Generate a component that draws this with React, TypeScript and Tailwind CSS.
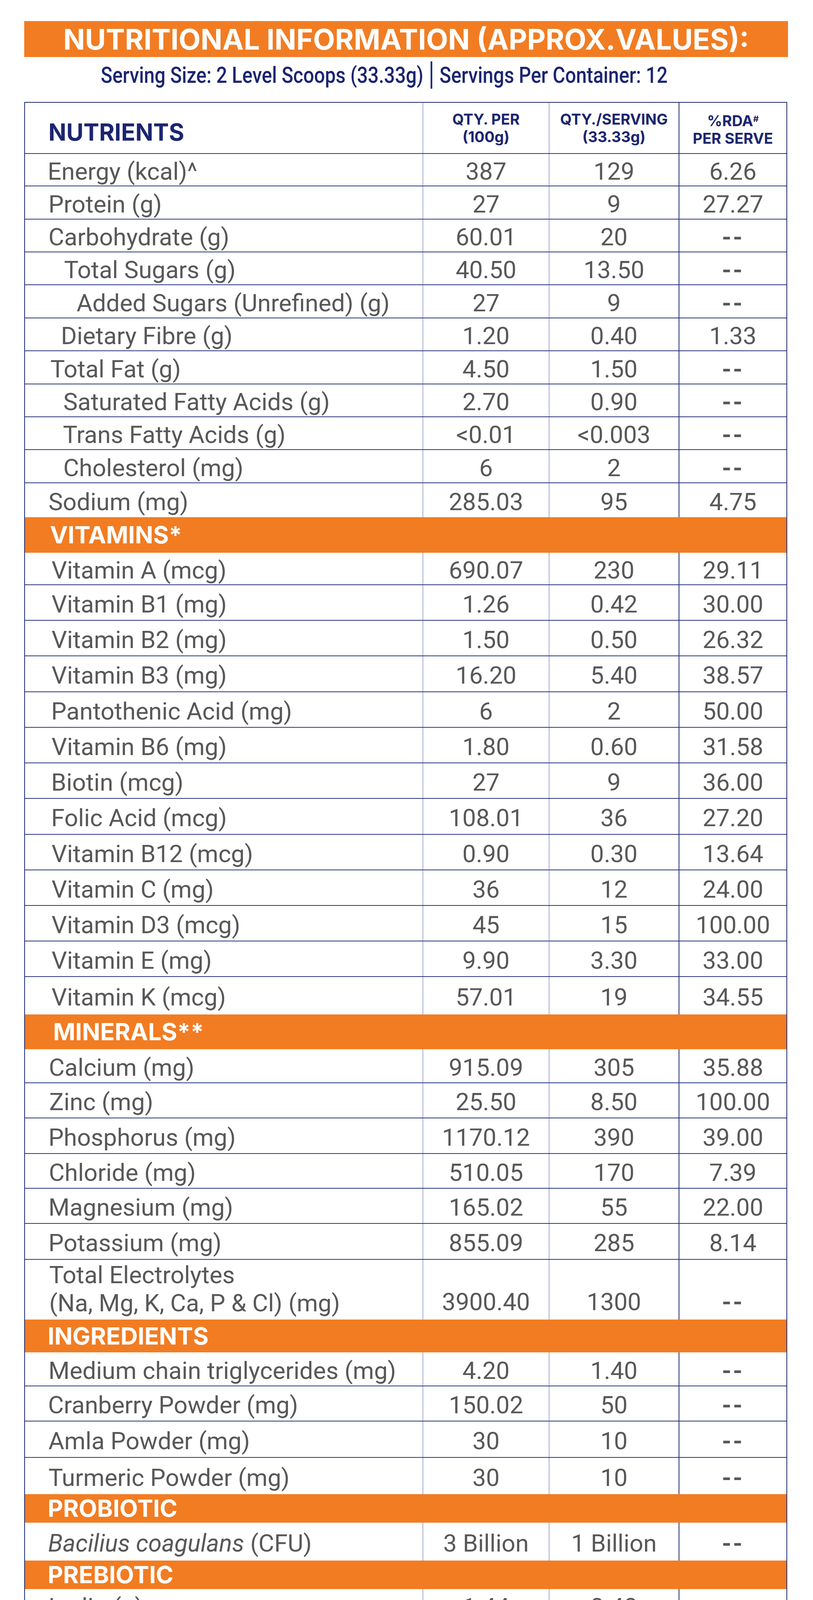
import React from "react";

type Band = { band: string; h: string; pl: string };
type Line = {
  name: React.ReactNode;
  v: [string, string, string];
  h: string;
  pl?: string;
  tall?: boolean;
};
type Item = Band | Line;

const items: Item[] = [
  { name: "Energy (kcal)^", v: ["387", "129", "6.26"], h: "h-[83px]", pl: "pl-[58px]" },
  { name: "Protein (g)", v: ["27", "9", "27.27"], h: "h-[85px]" },
  { name: "Carbohydrate (g)", v: ["60.01", "20", "--"], h: "h-[84px]" },
  { name: "Total Sugars (g)", v: ["40.50", "13.50", "--"], h: "h-[84px]", pl: "pl-[100px]" },
  { name: "Added Sugars (Unrefined) (g)", v: ["27", "9", "--"], h: "h-[85px]", pl: "pl-[132px]" },
  { name: "Dietary Fibre (g)", v: ["1.20", "0.40", "1.33"], h: "h-[84px]", pl: "pl-[92px]" },
  { name: "Total Fat (g)", v: ["4.50", "1.50", "--"], h: "h-[85px]", pl: "pl-[65px]" },
  { name: "Saturated Fatty Acids (g)", v: ["2.70", "0.90", "--"], h: "h-[84px]", pl: "pl-[98px]" },
  { name: "Trans Fatty Acids (g)", v: ["<0.01", "<0.003", "--"], h: "h-[84px]", pl: "pl-[97px]" },
  { name: "Cholesterol (mg)", v: ["6", "2", "--"], h: "h-[85px]", pl: "pl-[98px]" },
  { name: "Sodium (mg)", v: ["285.03", "95", "4.75"], h: "h-[87px]" },
  { band: "VITAMINS*", h: "h-[91px]", pl: "pl-[64px]" },
  { name: "Vitamin A (mcg)", v: ["690.07", "230", "29.11"], h: "h-[83px]", pl: "pl-[68px]" },
  { name: "Vitamin B1 (mg)", v: ["1.26", "0.42", "30.00"], h: "h-[91px]", pl: "pl-[68px]" },
  { name: "Vitamin B2 (mg)", v: ["1.50", "0.50", "26.32"], h: "h-[91px]", pl: "pl-[68px]" },
  { name: "Vitamin B3 (mg)", v: ["16.20", "5.40", "38.57"], h: "h-[92px]", pl: "pl-[68px]" },
  { name: "Pantothenic Acid (mg)", v: ["6", "2", "50.00"], h: "h-[91px]", pl: "pl-[67px]" },
  { name: "Vitamin B6 (mg)", v: ["1.80", "0.60", "31.58"], h: "h-[91px]", pl: "pl-[68px]" },
  { name: "Biotin (mcg)", v: ["27", "9", "36.00"], h: "h-[91px]", pl: "pl-[67px]" },
  { name: "Folic Acid (mcg)", v: ["108.01", "36", "27.20"], h: "h-[92px]", pl: "pl-[67px]" },
  { name: "Vitamin B12 (mcg)", v: ["0.90", "0.30", "13.64"], h: "h-[91px]", pl: "pl-[68px]" },
  { name: "Vitamin C (mg)", v: ["36", "12", "24.00"], h: "h-[91px]", pl: "pl-[68px]" },
  { name: "Vitamin D3 (mcg)", v: ["45", "15", "100.00"], h: "h-[91px]", pl: "pl-[68px]" },
  { name: "Vitamin E (mg)", v: ["9.90", "3.30", "33.00"], h: "h-[91px]", pl: "pl-[68px]" },
  { name: "Vitamin K (mcg)", v: ["57.01", "19", "34.55"], h: "h-[96px]", pl: "pl-[68px]" },
  { band: "MINERALS**", h: "h-[89px]", pl: "pl-[72px]" },
  { name: "Calcium (mg)", v: ["915.09", "305", "35.88"], h: "h-[87px]", pl: "pl-[61px]" },
  { name: "Zinc (mg)", v: ["25.50", "8.50", "100.00"], h: "h-[90px]", pl: "pl-[62px]" },
  { name: "Phosphorus (mg)", v: ["1170.12", "390", "39.00"], h: "h-[91px]" },
  { name: "Chloride (mg)", v: ["510.05", "170", "7.39"], h: "h-[89px]", pl: "pl-[61px]" },
  { name: "Magnesium (mg)", v: ["165.02", "55", "22.00"], h: "h-[90px]" },
  { name: "Potassium (mg)", v: ["855.09", "285", "8.14"], h: "h-[92px]" },
  {
    name: (
      <>
        Total Electrolytes
        <br />
        (Na, Mg, K, Ca, P &amp; Cl) (mg)
      </>
    ),
    v: ["3900.40", "1300", "--"],
    h: "h-[153px]",
    pl: "pl-[62px]",
    tall: true,
  },
  { band: "INGREDIENTS", h: "h-[84px]", pl: "pl-[58px]" },
  { name: "Medium chain triglycerides (mg)", v: ["4.20", "1.40", "--"], h: "h-[87px]" },
  { name: "Cranberry Powder (mg)", v: ["150.02", "50", "--"], h: "h-[90px]", pl: "pl-[59px]" },
  { name: "Amla Powder (mg)", v: ["30", "10", "--"], h: "h-[93px]" },
  { name: "Turmeric Powder (mg)", v: ["30", "10", "--"], h: "h-[93px]" },
  { band: "PROBIOTIC", h: "h-[73px]", pl: "pl-[58px]" },
  {
    name: (
      <>
        <i>Bacilius coagulans</i> (CFU)
      </>
    ),
    v: ["3 Billion", "1 Billion", "--"],
    h: "h-[97px]",
    pl: "pl-[59px]",
  },
  { band: "PREBIOTIC", h: "h-[73px]", pl: "pl-[58px]" },
  { name: "Inulin (g)", v: ["1.44", "0.48", "--"], h: "h-[87px]" },
];

const cols = "grid grid-cols-[1018px_323px_332px_276px]";

function BandRow({ item }: { item: Band }) {
  return (
    <div className={`flex items-center bg-[#f27c22] ${item.h} ${item.pl}`}>
      <span className="font-['Inter','Roboto',sans-serif] text-[61px] font-bold leading-none text-white">
        {item.band}
      </span>
    </div>
  );
}

function Value({ v }: { v: string }) {
  // the empty-value dashes are printed heavier in the source label
  if (v === "--") return <span className="font-bold tracking-[0.06em]">--</span>;
  return <span>{v}</span>;
}

function DataRow({ item, border }: { item: Line; border: string }) {
  const align = item.tall ? "items-end pb-[14px]" : "items-center pt-[8px]";
  return (
    <div className={`${cols} ${item.h} ${border}`}>
      <div
        className={`flex ${item.tall ? "items-start pt-[3px] leading-[72px]" : "items-center pt-[8px] leading-none"} ${item.pl ?? "pl-[60px]"}`}
      >
        <span>{item.name}</span>
      </div>
      <div className={`flex justify-center border-l border-[#4b5aa8] leading-none ${align}`}>
        <Value v={item.v[0]} />
      </div>
      <div className={`flex justify-center border-l border-[#4b5aa8] leading-none ${align}`}>
        <Value v={item.v[1]} />
      </div>
      <div className={`flex justify-center border-l-2 border-[#1e2a6e] leading-none ${align}`}>
        <Value v={item.v[2]} />
      </div>
    </div>
  );
}

export default function App() {
  return (
    <div className="min-h-[4215px] w-[2081px] bg-white pt-[54px] font-['Roboto','Liberation_Sans',sans-serif]">
      <div className="ml-[62px] w-[1955px]">
        <div className="flex h-[92px] items-center justify-center bg-[#f27c22]">
          <h1 className="whitespace-nowrap font-['Inter','Roboto',sans-serif] text-[73px] font-bold leading-none text-white">
            NUTRITIONAL INFORMATION (APPROX.VALUES):
          </h1>
        </div>
        <div className="flex h-[92px] items-center justify-center pr-[112px]">
          <div className="flex scale-x-[0.845] items-center whitespace-nowrap text-[58px] font-medium leading-none text-[#1b2570]">
            <span>Serving Size: 2 Level Scoops (33.33g)</span>
            <span className="mx-[22px] h-[70px] w-[5px] bg-[#1b2570]" />
            <span>Servings Per Container: 12</span>
          </div>
        </div>
      </div>

      <div className="ml-[62px] mt-[23px] w-[1953px] border-x-2 border-t-2 border-[#1e2a6e] text-[62px] text-[#585858]">
        {/* header */}
        <div
          className={`${cols} h-[131px] border-b-2 border-[#2b3680] font-['Inter','Roboto',sans-serif] font-bold text-[#1b2570]`}
        >
          <div className="flex items-center pl-[60px] pt-[20px]">
            <span className="text-[60px] leading-none">NUTRIENTS</span>
          </div>
          <div className="flex flex-col items-center justify-center border-l border-[#4b5aa8] text-[38px] leading-[45px]">
            <span>QTY. PER</span>
            <span>(100g)</span>
          </div>
          <div className="flex flex-col items-center justify-center border-l border-[#4b5aa8] text-[38px] leading-[45px]">
            <span>QTY./SERVING</span>
            <span>(33.33g)</span>
          </div>
          <div className="flex flex-col items-center justify-center border-l-2 border-[#1e2a6e] pt-[8px] text-[38px] leading-[45px]">
            <span>
              %RDA<sup className="text-[22px]">#</sup>
            </span>
            <span>PER SERVE</span>
          </div>
        </div>

        {items.map((item, i) => {
          if ("band" in item) return <BandRow key={i} item={item} />;
          const next = items[i + 1];
          let border = "border-b-2 border-[#2b3680]";
          if (!next) border = "border-b-[3px] border-[#1e2a6e]";
          else if ("band" in next) border = "";
          return <DataRow key={i} item={item} border={border} />;
        })}
      </div>
    </div>
  );
}
